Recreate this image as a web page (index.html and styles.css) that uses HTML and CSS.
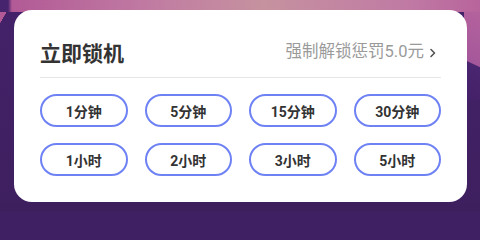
FILE: index.html
```html
<!DOCTYPE html>
<html lang="zh-CN">
<head>
<meta charset="utf-8">
<link rel="stylesheet" href="styles.css">
</head>
<body>
<div class="card">
  <div class="header">
    <div class="title">立即锁机</div>
    <div class="penalty">强制解锁惩罚5.0元
      <svg class="chev" width="8" height="10" viewBox="0 0 8 10"><path d="M2 1.5 L5.5 5 L2 8.5" fill="none" stroke="#555" stroke-width="1.6" stroke-linecap="round" stroke-linejoin="round"/></svg>
    </div>
  </div>
  <div class="grid">
    <div class="btn">1分钟</div>
    <div class="btn">5分钟</div>
    <div class="btn">15分钟</div>
    <div class="btn">30分钟</div>
    <div class="btn">1小时</div>
    <div class="btn">2小时</div>
    <div class="btn">3小时</div>
    <div class="btn">5小时</div>
  </div>
</div>
</body>
</html>
```
FILE: styles.css
```css
html {
  background: #3f2062;
}
html, body {
  margin: 0;
}
body {
  height: 212px;
  padding: 10px 13px 0 14px;
  box-sizing: border-box;
  font-family: Roboto, "Noto Sans CJK SC", sans-serif;
  background-color: #3f2062;
  background-repeat: no-repeat;
  background-image:
    linear-gradient(90deg, #47246e 0px, #47246e 8px, #b25a96 12px, #c07aa2 30%, #c6929f 55%, #c07aa4 85%, #b8649c 100%),
    linear-gradient(205deg, #b8659e 0%, #a4579a 62%, #4a2570 63%, #432168 100%),
    linear-gradient(120deg, #b25a96 0%, #b25a96 40%, rgba(0,0,0,0) 41%),
    linear-gradient(180deg, #44226a 0px, #3e1f5e 212px);
  background-size: 100% 12px, 16px 100px, 16px 30px, 100% 100%;
  background-position: 0 0, right 0 top 0, 0 0, 0 0;
}
.card {
  background: #fff;
  border-radius: 18px;
  padding: 0 26px 26px;
}
.header {
  display: flex;
  align-items: center;
  justify-content: space-between;
  padding: 27px 0 10px;
  border-bottom: 1px solid #e6e6e6;
}
.title {
  font-family: "Noto Sans CJK SC", sans-serif;
  font-size: 21px;
  line-height: 30px;
  font-weight: 700;
  color: #333;
}
.penalty {
  display: flex;
  align-items: center;
  font-size: 16.5px;
  line-height: 30px;
  color: #9a9a9a;
  margin-right: 4px;
}
.chev {
  margin-left: 5px;
  margin-top: 1px;
}
.grid {
  display: grid;
  grid-template-columns: repeat(4, 1fr);
  column-gap: 17px;
  row-gap: 16px;
  margin-top: 16px;
}
.btn {
  height: 33px;
  box-sizing: border-box;
  border: 2px solid #6f82f4;
  border-radius: 17px;
  display: flex;
  align-items: center;
  justify-content: center;
  font-size: 14px;
  font-weight: 700;
  color: #333;
}
```
